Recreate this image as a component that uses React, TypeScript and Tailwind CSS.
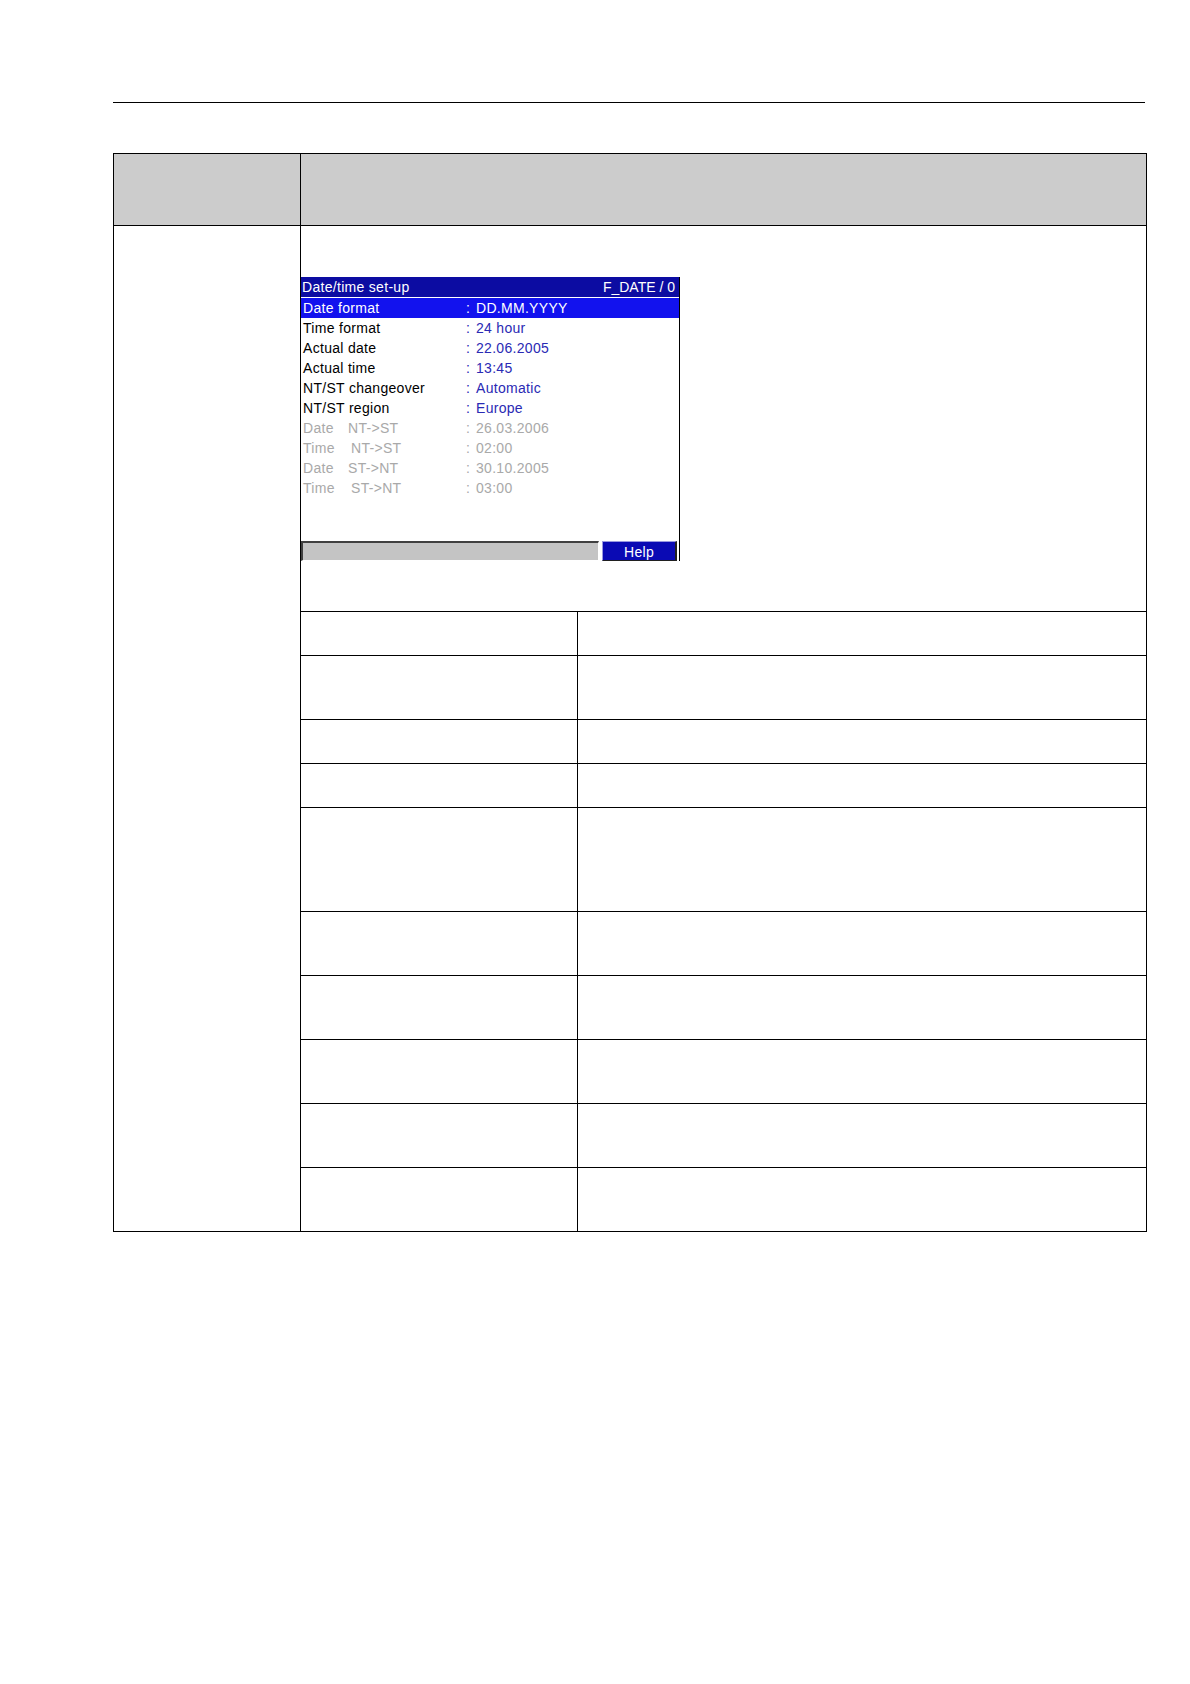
const rowHeights = [44, 64, 44, 44, 104, 64, 64, 64, 64, 64];

type ScreenRow = {
  label: string;
  second?: string;
  value: string;
  state: "selected" | "active" | "disabled";
};

const screenRows: ScreenRow[] = [
  { label: "Date format", value: "DD.MM.YYYY", state: "selected" },
  { label: "Time format", value: "24 hour", state: "active" },
  { label: "Actual date", value: "22.06.2005", state: "active" },
  { label: "Actual time", value: "13:45", state: "active" },
  { label: "NT/ST changeover", value: "Automatic", state: "active" },
  { label: "NT/ST region", value: "Europe", state: "active" },
  { label: "Date", second: "NT->ST", value: "26.03.2006", state: "disabled" },
  { label: "Time", second: "NT->ST", value: "02:00", state: "disabled" },
  { label: "Date", second: "ST->NT", value: "30.10.2005", state: "disabled" },
  { label: "Time", second: "ST->NT", value: "03:00", state: "disabled" },
];

function DeviceScreen() {
  return (
    <div className="flex h-[284px] w-[379px] flex-col border-r border-black bg-white text-[14px] tracking-[0.3px]">
      <div className="flex h-[21px] items-center justify-between border-b border-white bg-[#0c0ca2] pl-[1px] pr-[4px] text-white">
        <span>Date/time set-up</span>
        <span className="tracking-[0px]">F_DATE / 0</span>
      </div>
      {screenRows.map((r, i) => {
        const rowCls =
          r.state === "selected"
            ? "bg-[#1212ee] text-white"
            : r.state === "active"
              ? "text-black"
              : "text-[#a9a9a9]";
        const valueCls =
          r.state === "selected"
            ? "text-white"
            : r.state === "active"
              ? "text-[#2a2ab4]"
              : "text-[#a9a9a9]";
        return (
          <div key={i} className={`flex h-[20px] items-center ${rowCls}`}>
            <div className="flex w-[165px] pl-[2px]">
              {r.second ? (
                <>
                  <span className={r.label === "Date" ? "w-[45px]" : "w-[48px]"}>{r.label}</span>
                  <span>{r.second}</span>
                </>
              ) : (
                <span>{r.label}</span>
              )}
            </div>
            <span className={`w-[10px] ${valueCls}`}>:</span>
            <span className={valueCls}>{r.value}</span>
          </div>
        );
      })}
      <div className="flex-1" />
      <div className="flex h-[20px] items-stretch">
        <div className="w-[298px] border-t-2 border-l-2 border-b border-r border-t-[#404040] border-l-[#404040] border-b-white border-r-white bg-[#c4c4c4]" />
        <div className="ml-[3px] flex w-[75px] items-center justify-center border-t border-l border-r-2 border-b border-t-[#9a9ae0] border-l-[#9a9ae0] border-r-[#202020] border-b-[#202020] bg-[#0a0ab4] pt-[2px] text-white">
          Help
        </div>
      </div>
    </div>
  );
}

export default function App() {
  return (
    <div className="h-[1684px] w-[1190px] bg-white pt-[102px] font-['Liberation_Sans',Arial,sans-serif]">
      <div className="ml-[113px] h-px w-[1032px] bg-black" />

      <div className="ml-[113px] mt-[50px] w-[1034px] border border-black">
        <div className="flex h-[72px] border-b border-black bg-[#cccccc]">
          <div className="w-[187px] border-r border-black" />
          <div className="flex-1" />
        </div>

        <div className="flex">
          <div className="w-[187px] border-r border-black" />
          <div className="flex-1">
            <div className="pt-[51px] pb-[50px]">
              <DeviceScreen />
            </div>
            {rowHeights.map((h, i) => (
              <div key={i} className="flex border-t border-black" style={{ height: h }}>
                <div className="w-[277px] border-r border-black" />
                <div className="flex-1" />
              </div>
            ))}
          </div>
        </div>
      </div>
    </div>
  );
}
